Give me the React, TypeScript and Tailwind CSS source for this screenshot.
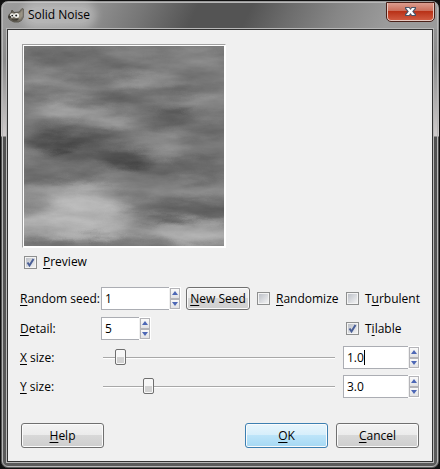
import React, { useState } from 'react';

function Key({ text }: { text: string }) {
  const i = text.indexOf('_');
  return (
    <span>
      {text.slice(0, i)}
      <span className="underline underline-offset-2">{text[i + 1]}</span>
      {text.slice(i + 2)}
    </span>
  );
}

function WilberIcon() {
  return (
    <svg width="16" height="15" viewBox="0 0 16 15" aria-hidden="true">
      <path d="M3 5 4 2 6 4.500 11 4 14 0.500 15.500 1 15.500 9 13.500 12.500 10.500 14 6 14 3 12.500 1 11 0.500 8 1.500 6Z" fill="#6b655a" stroke="#4a463e" strokeWidth="0.8" />
      <path d="M10 5.500 12.500 4.500 14.500 2 14.500 8 12 11.500 10 10Z" fill="#8d8675" />
      <path d="M4 5.500 7 5 6 7Z" fill="#9a9384" />
      <ellipse cx="4" cy="7.500" rx="2" ry="2.200" fill="#f4f4f0" />
      <ellipse cx="8.500" cy="7.500" rx="2.600" ry="2.500" fill="#f4f4f0" />
      <circle cx="4.200" cy="7.600" r="0.900" fill="#151515" />
      <circle cx="8.200" cy="7.600" r="1" fill="#151515" />
      <ellipse cx="1.600" cy="9" rx="1.500" ry="1.300" fill="#3a3833" />
      <path d="M3 11 6 11.500 11 10.500 9 12.500 5 12.500Z" fill="#35322b" />
    </svg>
  );
}

const blobs: [number, number, number, number, string, number][] = [
  [40, 8, 50, 9, '#585858', 0.6],
  [80, 22, 50, 6, '#5c5c5c', 0.5],
  [180, 10, 40, 6, '#8a8a8a', 0.4],
  [30, 38, 40, 7, '#989898', 0.5],
  [120, 37, 40, 6, '#a0a0a0', 0.6],
  [20, 48, 24, 4, '#585858', 0.6],
  [94, 52, 24, 7, '#545454', 0.7],
  [155, 44, 28, 7, '#545454', 0.7],
  [45, 66, 36, 8, '#a4a4a4', 0.7],
  [88, 76, 22, 6, '#a4a4a4', 0.7],
  [180, 58, 30, 6, '#989898', 0.5],
  [146, 72, 26, 6, '#484848', 0.8],
  [190, 82, 26, 9, '#545454', 0.6],
  [50, 91, 55, 9, '#545454', 0.8],
  [36, 98, 28, 7, '#363636', 0.9],
  [70, 112, 55, 9, '#545454', 0.8],
  [104, 111, 28, 8, '#404040', 0.9],
  [143, 100, 18, 14, '#949494', 0.6],
  [165, 121, 40, 8, '#505050', 0.7],
  [30, 127, 50, 7, '#5c5c5c', 0.6],
  [20, 148, 46, 12, '#989898', 0.6],
  [62, 150, 38, 16, '#acacac', 0.7],
  [180, 143, 32, 6, '#a0a0a0', 0.5],
  [60, 170, 44, 20, '#bcbcbc', 0.8],
  [30, 178, 60, 14, '#b0b0b0', 0.7],
  [165, 164, 52, 9, '#525252', 0.8],
  [110, 184, 60, 7, '#a4a4a4', 0.7],
  [175, 188, 50, 12, '#a8a8a8', 0.8],
  [80, 198, 70, 3, '#6c6c6c', 0.6],
];

function NoisePreview() {
  return (
    <svg className="block" width="200" height="200" viewBox="0 0 200 200" role="img" aria-label="Solid noise preview">
      <defs>
        <filter id="soft" x="-50%" y="-150%" width="200%" height="400%" colorInterpolationFilters="sRGB">
          <feGaussianBlur stdDeviation="10 4" />
        </filter>
        <filter id="wisps" x="0" y="0" width="200" height="200" filterUnits="userSpaceOnUse" colorInterpolationFilters="sRGB">
          <feTurbulence type="fractalNoise" baseFrequency="0.02 0.07" numOctaves="4" seed="7" result="n" />
          <feColorMatrix in="n" type="matrix" values="1 0 0 0 0  1 0 0 0 0  1 0 0 0 0  0 0 0 0 1" result="g" />
          <feDisplacementMap in="SourceGraphic" in2="n" scale="18" xChannelSelector="G" yChannelSelector="B" result="d" />
          <feComposite in="d" in2="g" operator="arithmetic" k1="0" k2="1" k3="0.16" k4="-0.055" />
        </filter>
      </defs>
      <g filter="url(#wisps)">
        <rect x="-20" y="-20" width="240" height="240" fill="#757575" />
        {blobs.map(([cx, cy, rx, ry, fill, opacity], i) => (
          <ellipse key={i} cx={cx} cy={cy} rx={rx} ry={ry} fill={fill} opacity={opacity} filter="url(#soft)" />
        ))}
      </g>
    </svg>
  );
}

function Check({ label, checked = false }: { label: string; checked?: boolean }) {
  const [on, setOn] = useState(checked);
  return (
    <label className="flex items-center gap-1.5">
      <span className="grid size-[13px] shrink-0">
        <input
          type="checkbox"
          checked={on}
          onChange={() => setOn(!on)}
          className="col-start-1 row-start-1 size-[13px] appearance-none border border-[#8e8f8f] bg-linear-to-br from-[#b8bcc4] to-[#f8f8f8] shadow-[inset_0_0_0_1px_#f4f4f4]"
        />
        {on && (
          <svg className="pointer-events-none col-start-1 row-start-1" width="13" height="13" viewBox="0 0 13 13" aria-hidden="true">
            <path d="M3.500 6.500 5.500 9.500 9.500 3" fill="none" stroke="#4a5f97" strokeWidth="2" />
          </svg>
        )}
      </span>
      <Key text={label} />
    </label>
  );
}

function Arrow({ down = false, name }: { down?: boolean; name: string }) {
  return (
    <button
      type="button"
      aria-label={name}
      className="flex h-[11px] w-[10px] items-center justify-center border border-[#b4b4b8] bg-linear-to-b from-[#fafafa] to-[#e2e2e4]"
    >
      <svg width="6" height="4" viewBox="0 0 6 4" aria-hidden="true">
        <path d={down ? 'M0 0H6L3 4Z' : 'M0 4H6L3 0Z'} fill="#4d67b5" />
      </svg>
    </button>
  );
}

function Spin({ id, value, width, name, caret = false }: { id?: string; value: string; width: string; name: string; caret?: boolean }) {
  const [text, setText] = useState(value);
  return (
    <div className={`flex h-[23px] ${width}`}>
      <div className="grid min-w-0 flex-1 items-center border border-r-0 border-[#abadb3] bg-white">
        <input
          id={id}
          aria-label={name}
          value={text}
          onChange={(e) => setText(e.target.value)}
          className="col-start-1 row-start-1 w-full min-w-0 bg-transparent pl-[3px] outline-none"
        />
        {caret && (
          <span className="pointer-events-none col-start-1 row-start-1 flex items-center pl-[3px]" aria-hidden="true">
            <span className="invisible">{text}</span>
            <span className="h-[15px] w-px bg-black" />
          </span>
        )}
      </div>
      <div className="flex flex-col border border-l-0 border-white pl-px">
        <Arrow name={`Increase ${name}`} />
        <Arrow name={`Decrease ${name}`} down />
      </div>
    </div>
  );
}

function SizeRow({ label, id, name, pos, value, caret }: { label: string; id: string; name: string; pos: number; value: string; caret?: boolean }) {
  const [v, setV] = useState(pos);
  return (
    <div className="flex items-center">
      <label htmlFor={id} className="w-[81px] shrink-0">
        <Key text={label} />
      </label>
      <input
        id={id}
        type="range"
        min="0"
        max="220"
        value={v}
        onChange={(e) => setV(Number(e.target.value))}
        className="mr-2 ml-[2px] h-[17px] min-w-0 flex-1 appearance-none bg-transparent [&::-webkit-slider-runnable-track]:h-[2px] [&::-webkit-slider-runnable-track]:border-t [&::-webkit-slider-runnable-track]:border-b [&::-webkit-slider-runnable-track]:border-t-[#a8a8a8] [&::-webkit-slider-runnable-track]:border-b-white [&::-webkit-slider-thumb]:-mt-[9px] [&::-webkit-slider-thumb]:h-4 [&::-webkit-slider-thumb]:w-[11px] [&::-webkit-slider-thumb]:appearance-none [&::-webkit-slider-thumb]:rounded-xs [&::-webkit-slider-thumb]:border [&::-webkit-slider-thumb]:border-[#6f6f6f] [&::-webkit-slider-thumb]:bg-[linear-gradient(#f7f7f7_50%,#d2d2d2_50%)] [&::-webkit-slider-thumb]:shadow-[inset_0_0_0_1px_#f8f8f8]"
      />
      <Spin value={value} width="w-[77px]" name={name} caret={caret} />
    </div>
  );
}

const buttonBase = 'flex items-center justify-center rounded-[3px] border shadow-[inset_0_0_0_1px_#fbfbfb]';
const grey = 'border-[#707070] bg-[linear-gradient(#f3f3f3,#ebebeb_50%,#d8d8d8_50%,#cecece)]';
const blue = 'border-[#3c7fb1] bg-[linear-gradient(#e8f5fc,#d5eefb_50%,#bce4f9_50%,#a5d8f3)]';

export default function App() {
  return (
    <div className="bg-[#101010] font-['Open_Sans','Noto_Sans',sans-serif] text-[12px] leading-4 text-black">
      <div className="flex min-h-screen flex-col rounded-lg border border-[#111] bg-[linear-gradient(#999_0,#8a8a8a_60px,#d0cccc_135px,#505050_136px,#5a5a5a)] p-px">
        <div className="flex flex-1 flex-col rounded-md border border-[#b8b8b8] px-1 pb-1">
          <header className="-mx-1 flex h-[26px] items-start rounded-t-md bg-[linear-gradient(115deg,#9c9c9c_0%,#8e8e8e_22%,#767676_32%,#545454_44%,#545454_56%,#6c6c6c_65%,#868686_76%,#9b9b9b_88%)] pl-[5px]">
            <div className="flex h-[24px] items-center gap-1">
              <WilberIcon />
              <h1 className="rounded-full bg-white/30 shadow-[0_0_8px_6px_rgba(255,255,255,0.3)]">Solid Noise</h1>
            </div>
            <button
              type="button"
              aria-label="Close"
              className="mr-[3px] ml-auto flex h-[18px] w-[47px] items-center justify-center rounded-b-[4px] border border-t-0 border-[#e8c8c0] bg-[linear-gradient(#dc9c8e,#cb6c58_48%,#b93218_50%,#d05a40)] outline outline-[#4b2018]"
            >
              <svg width="11" height="9" viewBox="0 0 11 9" aria-hidden="true">
                <path d="M0 0H4.500L5.500 1.500 6.500 0H11V2L8.500 4.500 11 7V9H6.500L5.500 7.500 4.500 9H0V7L2.500 4.500 0 2Z" fill="#4b5568" />
                <path d="M1 1H4L5.500 3 7 1H10L7.200 4.500 10 8H7L5.500 6 4 8H1L3.800 4.500Z" fill="#fff" />
              </svg>
            </button>
          </header>
          <main className="flex flex-1 flex-col border border-[#333] bg-[#f0f0f0] px-[12px] pt-[14px] pb-3 outline outline-[#b8b8b8]">
            <div className="ml-[2px] self-start border border-t-[#a0a0a0] border-r-white border-b-white border-l-[#a0a0a0]">
              <div className="border border-white">
                <NoisePreview />
              </div>
            </div>
            <div className="mt-[6px] ml-[4px]">
              <Check label="_Preview" checked />
            </div>
            <div className="mt-[17px] grid grid-cols-[auto_1fr_auto] gap-y-[7px]">
              <div className="flex items-center">
                <label htmlFor="seed" className="w-[81px]">
                  <Key text="_Random seed:" />
                </label>
                <Spin id="seed" value="1" width="w-[80px]" name="Random seed" />
                <button type="button" className={`${buttonBase} ${grey} ml-[5px] h-[23px] w-[64px]`}>
                  <Key text="_New Seed" />
                </button>
              </div>
              <div className="flex items-center pl-[7px]">
                <Check label="_Randomize" />
              </div>
              <div className="flex w-[74px] items-center">
                <Check label="T_urbulent" />
              </div>
              <div className="flex items-center">
                <label htmlFor="detail" className="w-[81px]">
                  <Key text="_Detail:" />
                </label>
                <Spin id="detail" value="5" width="w-[50px]" name="Detail" />
              </div>
              <div className="col-start-3 flex items-center">
                <Check label="T_ilable" checked />
              </div>
            </div>
            <div className="mt-[6px] flex flex-col gap-[6px]">
              <SizeRow label="_X size:" id="xsize" name="X size" pos={12} value="1.0" caret />
              <SizeRow label="_Y size:" id="ysize" name="Y size" pos={40} value="3.0" />
            </div>
            <footer className="mx-px mt-auto flex gap-2 pb-px">
              <button type="button" className={`${buttonBase} ${grey} mr-auto h-[25px] w-[83px]`}>
                <Key text="_Help" />
              </button>
              <button type="button" className={`${buttonBase} ${blue} h-[25px] w-[83px]`}>
                <Key text="_OK" />
              </button>
              <button type="button" className={`${buttonBase} ${grey} h-[25px] w-[83px]`}>
                <Key text="_Cancel" />
              </button>
            </footer>
          </main>
        </div>
      </div>
    </div>
  );
}
